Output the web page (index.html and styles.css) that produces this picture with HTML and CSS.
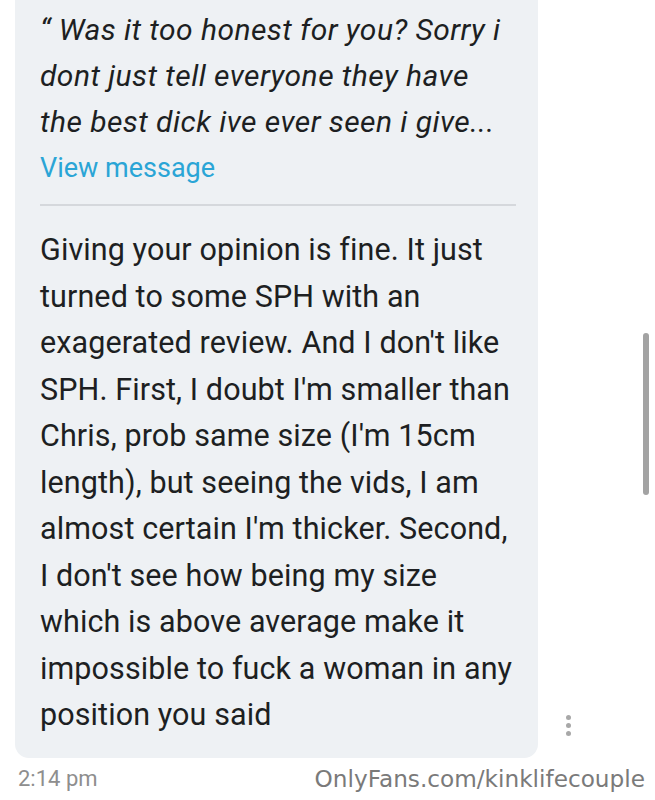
FILE: index.html
```html
<!DOCTYPE html>
<html>
<head>
<meta charset="utf-8">
<link rel="stylesheet" href="styles.css">
</head>
<body>
<div class="screen">
  <div class="row">
    <div class="bubble">
      <div class="quote">“ Was it too honest for you? Sorry i<br>dont just tell everyone they have<br>the best dick ive ever seen i give...</div>
      <div class="view">View message</div>
      <div class="divider"></div>
      <div class="body">Giving your opinion is fine. It just<br>turned to some SPH with an<br>exagerated review. And I don't like<br>SPH. First, I doubt I'm smaller than<br>Chris, prob same size (I'm 15cm<br>length), but seeing the vids, I am<br>almost certain I'm thicker. Second,<br>I don't see how being my size<br>which is above average make it<br>impossible to fuck a woman in any<br>position you said</div>
    </div>
    <div class="side">
      <div class="dots"><span></span><span></span><span></span></div>
    </div>
  </div>
  <div class="footer">
    <span class="time">2:14 pm</span>
    <span class="mark">OnlyFans.com/kinklifecouple</span>
  </div>
  <div class="scrollbar"></div>
</div>
</body>
</html>
```
FILE: styles.css
```css
html, body {
  margin: 0;
  padding: 0;
  background: #ffffff;
}
.screen {
  position: relative;
  width: 655px;
  height: 800px;
  overflow: hidden;
  font-family: Roboto, "Liberation Sans", sans-serif;
}
.row {
  display: flex;
  align-items: flex-end;
}
.bubble {
  margin-left: 15px;
  width: 498px;
  padding: 7px 0 19px 25px;
  background: #eef1f4;
  border-radius: 0 0 14px 14px;
  color: #1d1f22;
}
.quote {
  font-style: italic;
  font-size: 30px;
  line-height: 46px;
  letter-spacing: 0.45px;
}
.view {
  font-size: 27px;
  line-height: 46px;
  color: #2aa5d6;
}
.divider {
  height: 2px;
  width: 476px;
  background: #d5d8dc;
  margin-top: 13px;
  margin-bottom: 21px;
}
.body {
  font-size: 30.5px;
  line-height: 46.5px;
  letter-spacing: 0.1px;
}
.side {
  flex: 1;
  display: flex;
  padding-left: 28px;
  padding-bottom: 22px;
}
.dots {
  display: flex;
  flex-direction: column;
  gap: 3px;
}
.dots span {
  width: 5px;
  height: 5px;
  border-radius: 50%;
  background: #a8a8a8;
}
.footer {
  display: flex;
  justify-content: space-between;
  align-items: center;
  padding: 7px 10px 0 18px;
}
.time {
  font-size: 22px;
  color: #8e8e8e;
}
.mark {
  font-family: "DejaVu Sans", sans-serif;
  font-size: 23.2px;
  color: #7a7a7a;
}
.scrollbar {
  position: absolute;
  left: 643px;
  top: 333px;
  width: 6px;
  height: 162px;
  border-radius: 3px;
  background: #a3a3a3;
}
```
